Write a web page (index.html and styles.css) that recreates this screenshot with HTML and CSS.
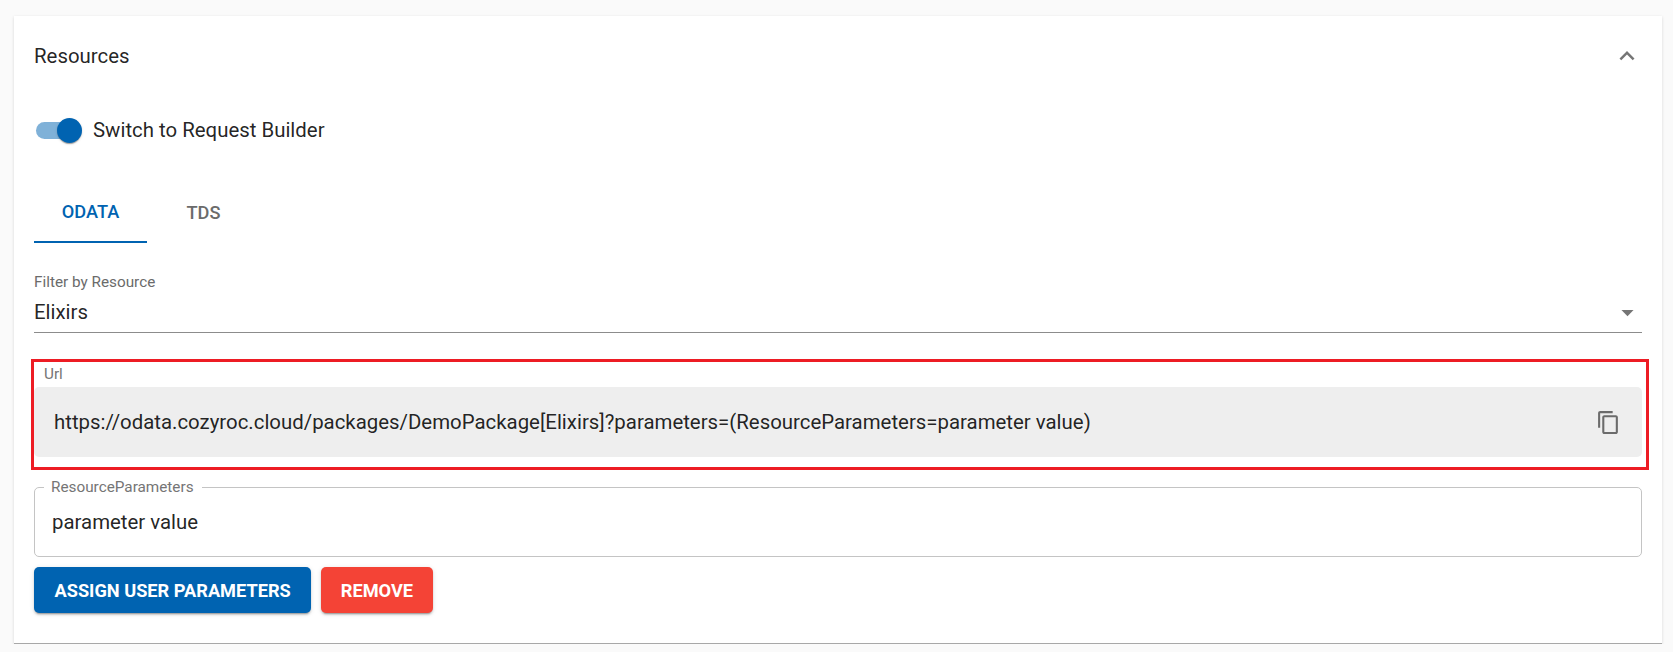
FILE: index.html
```html
<!DOCTYPE html>
<html lang="en">
<head>
  <meta charset="UTF-8" />
  <meta name="viewport" content="width=device-width, initial-scale=1.0" />
  <title>Resources</title>
  <link rel="stylesheet" href="styles.css">
</head>
<body>
  <div class="card">
    <div class="card-header">
      <span class="card-title">Resources</span>
      <svg class="chevron" width="30" height="30" viewBox="0 0 24 24"><path d="M12 8l-6 6 1.41 1.41L12 10.83l4.59 4.58L18 14z"></path></svg>
    </div>

    <div class="switch-row">
      <span class="switch"><span class="switch-track"></span><span class="switch-thumb"></span></span>
      <span class="switch-label">Switch to Request Builder</span>
    </div>

    <div class="tabs">
      <div class="tab active">ODATA</div>
      <div class="tab">TDS</div>
    </div>

    <div class="select-field">
      <div class="select-label">Filter by Resource</div>
      <div class="select-value">
        <span>Elixirs</span>
        <svg class="select-arrow" width="29" height="29" viewBox="0 0 24 24"><path d="M7 10l5 5 5-5z"></path></svg>
      </div>
    </div>

    <div class="url-field">
      <div class="highlight"></div>
      <div class="url-label">Url</div>
      <div class="url-box">
        <span>https://odata.cozyroc.cloud/packages/DemoPackage[Elixirs]?parameters=(ResourceParameters=parameter value)</span>
        <svg class="copy-icon" width="25" height="25" viewBox="0 0 24 24"><path d="M16 1H4c-1.1 0-2 .9-2 2v14h2V3h12V1zm3 4H8c-1.1 0-2 .9-2 2v14c0 1.1.9 2 2 2h11c1.1 0 2-.9 2-2V7c0-1.1-.9-2-2-2zm0 16H8V7h11v14z"></path></svg>
      </div>
    </div>

    <div class="outlined-field">
      <span class="outlined-label">ResourceParameters</span>
      <span>parameter value</span>
    </div>

    <div class="actions">
      <button class="btn btn-primary">Assign user parameters</button>
      <button class="btn btn-danger">Remove</button>
    </div>
  </div>
</body>
</html>
```

FILE: styles.css
```css
body {
  font-family: Roboto, "Liberation Sans", sans-serif;
  background-color: #fafafa;
  color: rgba(0, 0, 0, 0.87);
  margin: 0;
  padding: 16px 11px 0 14px;
}
.card {
  height: 628px;
  box-sizing: border-box;
  padding: 0 20px;
  background-color: white;
  border-bottom: 1px solid #a8a8a8;
  box-shadow: 0 1px 3px rgba(0, 0, 0, 0.14);
}
.card-header {
  display: flex;
  justify-content: space-between;
  align-items: center;
  height: 80px;
}
.card-title {
  font-size: 20.4px;
}
.chevron {
  fill: #757575;
}
.switch-row {
  display: flex;
  align-items: center;
  height: 28px;
  margin-top: 20px;
}
.switch {
  position: relative;
  width: 48px;
  height: 25px;
  margin-left: 2px;
  margin-right: 9px;
}
.switch-track {
  position: absolute;
  left: 0;
  top: 4px;
  width: 44px;
  height: 17px;
  border-radius: 9px;
  background-color: #0063b1;
  opacity: 0.5;
}
.switch-thumb {
  position: absolute;
  left: 21px;
  top: 0;
  width: 25px;
  height: 25px;
  border-radius: 50%;
  background-color: #0063b1;
  box-shadow: 0 2px 1px -1px rgba(0, 0, 0, 0.2), 0 1px 1px rgba(0, 0, 0, 0.14), 0 1px 3px rgba(0, 0, 0, 0.12);
}
.switch-label {
  font-size: 20.4px;
}
.tabs {
  display: flex;
  margin-top: 38px;
}
.tab {
  width: 113px;
  height: 61px;
  box-sizing: border-box;
  display: flex;
  align-items: center;
  justify-content: center;
  font-size: 18.2px;
  font-weight: 500;
  color: #6b6b6b;
}
.tab.active {
  color: #0063b1;
  border-bottom: 2px solid #0063b1;
}
.select-field {
  margin-top: 29px;
  border-bottom: 1px solid #8c8c8c;
}
.select-label {
  font-size: 15.3px;
  line-height: 20px;
  color: #6b6b6b;
}
.select-value {
  display: flex;
  justify-content: space-between;
  align-items: center;
  height: 40px;
  font-size: 20.4px;
}
.select-arrow {
  fill: #757575;
}
.url-field {
  position: relative;
  margin-top: 29px;
}
.highlight {
  position: absolute;
  left: -3px;
  right: -7px;
  top: -3px;
  bottom: -13px;
  border: 3px solid #ed1c24;
}
.url-label {
  padding-left: 10px;
  height: 25px;
  line-height: 24px;
  font-size: 15.3px;
  color: #757575;
}
.url-box {
  display: flex;
  justify-content: space-between;
  align-items: center;
  height: 70px;
  padding: 0 21px 0 20px;
  background-color: #eeeeee;
  border-radius: 5px;
  font-size: 20.4px;
}
.copy-icon {
  fill: #6b6b6b;
}
.outlined-field {
  position: relative;
  display: flex;
  align-items: center;
  height: 70px;
  box-sizing: border-box;
  margin-top: 30px;
  padding: 0 17px;
  border: 1px solid #c4c4c4;
  border-radius: 5px;
  font-size: 20.4px;
}
.outlined-label {
  position: absolute;
  left: 9px;
  top: -10px;
  padding: 0 8px 0 7px;
  background-color: white;
  font-size: 15.3px;
  line-height: 18px;
  color: #757575;
}
.actions {
  display: flex;
  gap: 10px;
  margin-top: 10px;
}
.btn {
  height: 46px;
  padding: 0 19.5px;
  border: none;
  border-radius: 5px;
  font-family: inherit;
  font-size: 18.2px;
  font-weight: 700;
  text-transform: uppercase;
  color: white;
  box-shadow: 0 3px 1px -2px rgba(0, 0, 0, 0.2), 0 2px 2px rgba(0, 0, 0, 0.14), 0 1px 5px rgba(0, 0, 0, 0.12);
}
.btn-primary {
  padding: 0 20.5px;
  background-color: #0063b1;
}
.btn-danger {
  background-color: #f44336;
}
```
